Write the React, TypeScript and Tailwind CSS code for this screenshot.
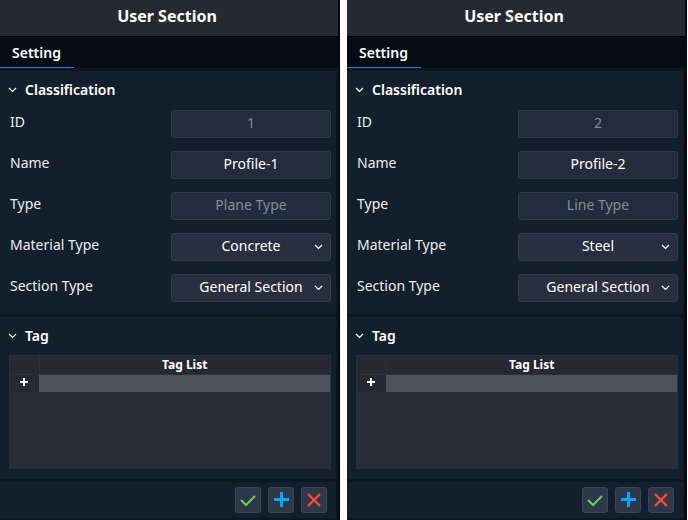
import React, { useId } from "react";

type Profile = {
  id: string;
  name: string;
  type: string;
  material: string;
  section: string;
};

const profiles: Profile[] = [
  { id: "1", name: "Profile-1", type: "Plane Type", material: "Concrete", section: "General Section" },
  { id: "2", name: "Profile-2", type: "Line Type", material: "Steel", section: "General Section" },
];

function Chevron({ className = "" }: { className?: string }) {
  return (
    <svg className={className} width="9" height="6" viewBox="0 0 9 6" fill="none" stroke="currentColor" strokeWidth="1.2" aria-hidden="true">
      <path d="M1 1l3.5 3.5L8 1" />
    </svg>
  );
}

function Field({ label, value, disabled = false }: { label: string; value: string; disabled?: boolean }) {
  const id = useId();
  return (
    <div className="flex items-center justify-between">
      <label htmlFor={id} className="pb-1">{label}</label>
      <input
        id={id}
        defaultValue={value}
        disabled={disabled}
        className="h-7 w-40 rounded-[3px] border border-[#303a4a] bg-[#232c3c] pb-1 text-center text-white disabled:text-[#858b94]"
      />
    </div>
  );
}

function SelectField({ label, value }: { label: string; value: string }) {
  const id = useId();
  return (
    <div className="flex items-center justify-between">
      <label htmlFor={id} className="pb-1">{label}</label>
      <div className="relative">
        <select
          id={id}
          defaultValue={value}
          className="block h-7 w-40 appearance-none rounded-[3px] border border-[#323c4d] bg-[#272f40] pb-0.5 text-center text-white [text-align-last:center]"
        >
          <option>{value}</option>
        </select>
        <Chevron className="pointer-events-none absolute top-[11px] right-2 text-white" />
      </div>
    </div>
  );
}

function SectionTitle({ children }: { children: React.ReactNode }) {
  return (
    <button type="button" className="flex h-9 w-full items-center gap-2 px-2 pt-0.5 font-semibold text-white">
      <Chevron />
      <h2>{children}</h2>
    </button>
  );
}

function ActionButton({ label, className, children }: { label: string; className: string; children: React.ReactNode }) {
  return (
    <button
      type="button"
      aria-label={label}
      className={`flex size-[26px] items-center justify-center rounded-[3px] border border-[#3a4559] bg-[#2f3849] ${className}`}
    >
      <svg width="16" height="16" viewBox="0 0 16 16" fill="none" stroke="currentColor" aria-hidden="true">
        {children}
      </svg>
    </button>
  );
}

function UserSection({ profile }: { profile: Profile }) {
  return (
    <section className="flex min-w-0 flex-1 flex-col border-r-2 border-[#040a12] bg-[#0d1721] pb-0.5">
      <header className="flex h-[37px] items-center justify-center border-b border-black bg-[#252932] pr-1 pb-1">
        <h1 className="text-base font-bold text-white">User Section</h1>
      </header>
      <nav className="flex h-[31px] bg-[#050c14]">
        <a href="#setting" className="border-b border-[#2580cc] pt-1.5 pr-[13px] pl-3 font-semibold text-white">
          Setting
        </a>
      </nav>
      <div className="flex flex-1 flex-col gap-[3px] pt-[3px] pr-0.5">
        <div className="bg-[#141f2c] pb-3">
          <SectionTitle>Classification</SectionTitle>
          <div className="flex flex-col gap-[13px] pt-[3px] pr-[5px] pl-2.5">
            <Field label="ID" value={profile.id} disabled />
            <Field label="Name" value={profile.name} />
            <Field label="Type" value={profile.type} disabled />
            <SelectField label="Material Type" value={profile.material} />
            <SelectField label="Section Type" value={profile.section} />
          </div>
        </div>
        <div className="flex flex-1 flex-col bg-[#141f2c] pb-2.5">
          <SectionTitle>Tag</SectionTitle>
          <div className="mt-0.5 mr-[5px] ml-[9px] flex-1 border border-[#2a3038] bg-[#282e37]">
            <table className="w-full table-fixed border-collapse text-xs">
              <thead>
                <tr className="h-[18px] border-b border-[#2b3039] bg-[#252932] leading-4 text-white">
                  <th aria-label="Row" className="w-[29px] border-r border-[#2b3039] p-0" />
                  <th className="p-0 font-bold">Tag List</th>
                </tr>
              </thead>
              <tbody>
                <tr className="h-[18px]">
                  <td className="bg-[#252932] p-0 pr-0.5 pb-0.5">
                    <button type="button" aria-label="Add tag" className="mx-auto block text-white">
                      <svg width="8" height="8" viewBox="0 0 8 8" fill="none" stroke="currentColor" strokeWidth="2" aria-hidden="true">
                        <path d="M4 0v8M0 4h8" />
                      </svg>
                    </button>
                  </td>
                  <td className="bg-[#4d535d] p-0" />
                </tr>
              </tbody>
            </table>
          </div>
        </div>
        <footer className="flex h-9 items-center justify-end gap-[7px] bg-[#141f2c] pr-[9px]">
          <ActionButton label="Apply" className="text-[#62d84e]">
            <path strokeWidth="2" d="M1 8l5 5 9-9" />
          </ActionButton>
          <ActionButton label="Add" className="text-[#00aaff]">
            <path strokeWidth="3" d="M8.5 0v15M1 7.5h15" />
          </ActionButton>
          <ActionButton label="Close" className="text-[#ff4931]">
            <path strokeWidth="2.4" d="M2 2l12 12M14 2L2 14" />
          </ActionButton>
        </footer>
      </div>
    </section>
  );
}

export default function App() {
  return (
    <main className="flex min-h-screen gap-[7px] bg-white pr-px font-['Noto_Sans',sans-serif] text-sm leading-5 text-[#eceef0]">
      {profiles.map((profile) => (
        <UserSection key={profile.id} profile={profile} />
      ))}
    </main>
  );
}
